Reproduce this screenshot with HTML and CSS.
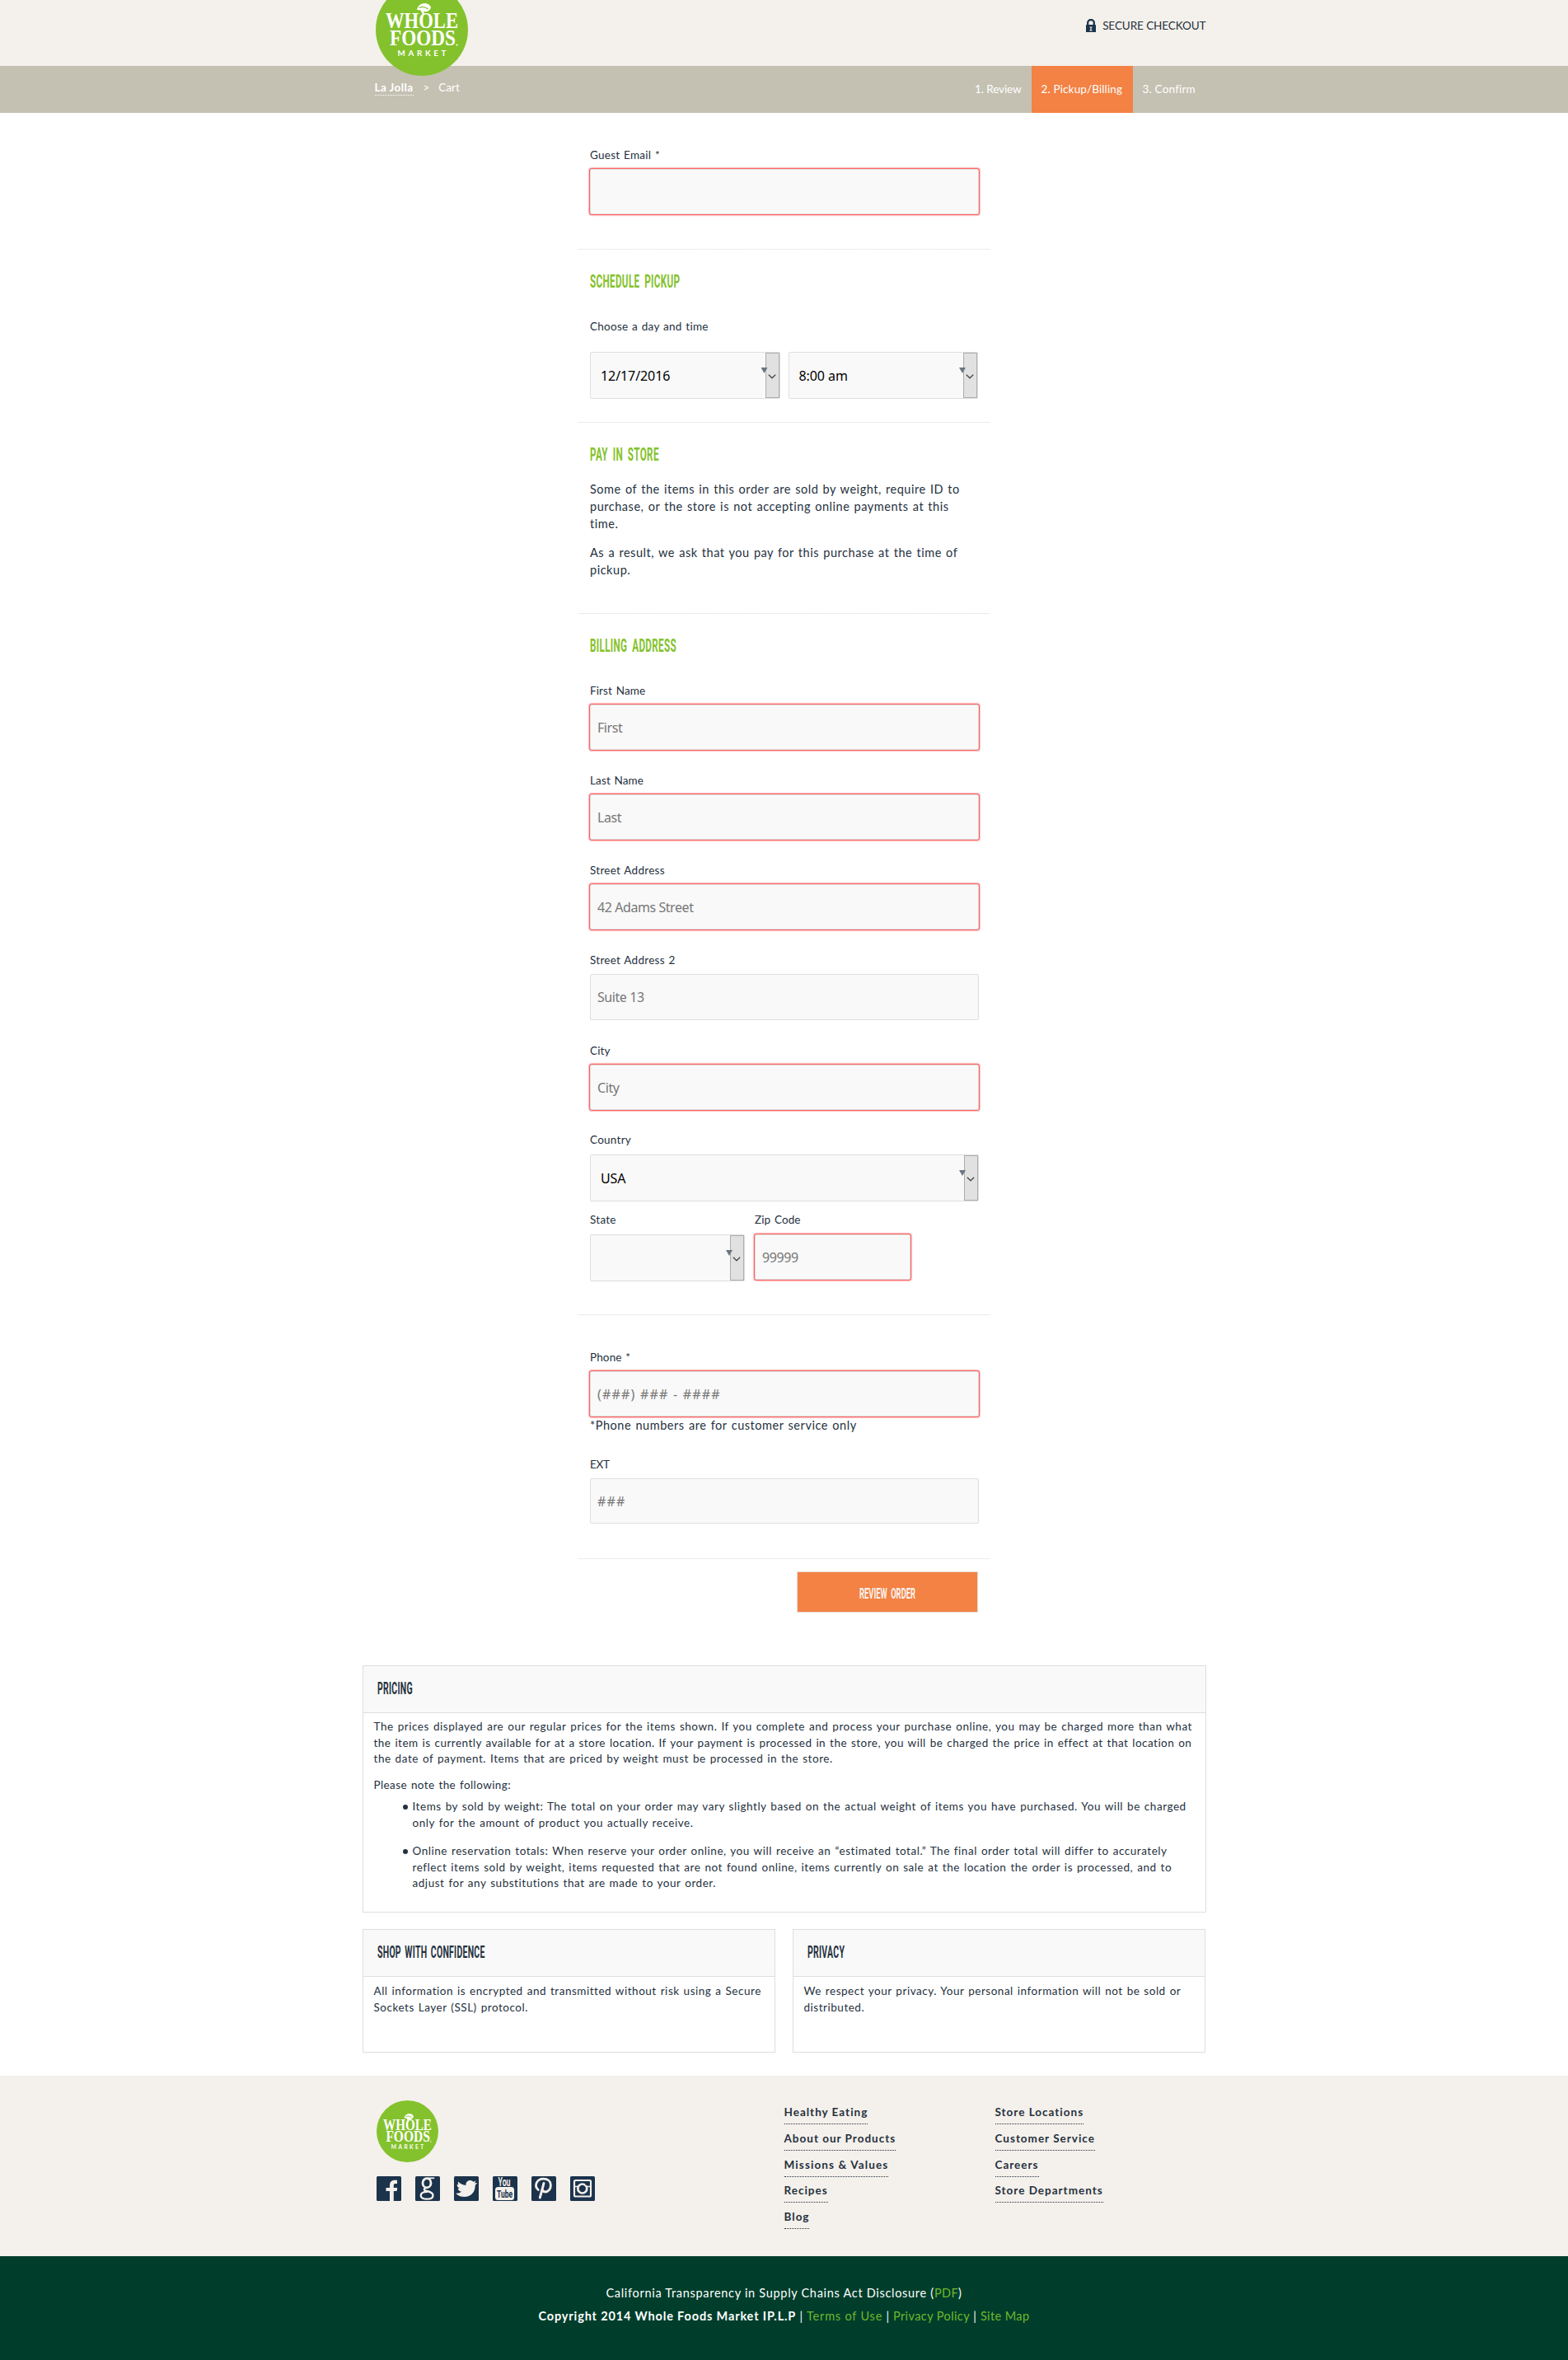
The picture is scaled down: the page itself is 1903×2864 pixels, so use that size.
FILE: index.html
```
<!DOCTYPE html>
<html lang="en">
<head>
<meta charset="utf-8">
<title>Whole Foods Market - Pickup/Billing</title>
<link rel="stylesheet" href="styles.css">
</head>
<body>
<header class="header">
  <div class="container header-row">
    <a class="brand">
      <svg class="brand-logo" viewBox="0 0 112 112">
        <circle cx="56" cy="56" r="56" fill="#84c22d"/>
        <g fill="#fff">
          <text class="logo-serif" x="12" y="53.500" font-size="27" textLength="88" lengthAdjust="spacingAndGlyphs">WHOLE</text>
          <text class="logo-serif" x="17" y="75" font-size="27" textLength="80" lengthAdjust="spacingAndGlyphs">FOODS</text>
          <text class="logo-sans" x="26.500" y="87.500" font-size="9.800" textLength="59">MARKET</text>
          <path d="M50 32c1-5 5-8.500 10-8 4 .400 7 3 7 5.500-1.500 4-5 5.500-9 4.500l1.500 4-3.500-2-1-3c-2-1-3.500-1.300-5-1z"/>
          <circle cx="98.500" cy="74.500" r="1.100"/>
        </g>
        <path d="M52.500 29.500c4-2 7.500-1.500 11 1.500" fill="none" stroke="#84c22d" stroke-width="1.300"/>
      </svg>
    </a>
    <div class="secure">
      <svg class="lock" viewBox="0 0 12 16"><path d="M2.200 7V4.500a3.800 3.500 0 0 1 7.600 0V7" fill="none" stroke="#1c334c" stroke-width="2.300"/><rect y="7" width="12" height="9" rx=".6" fill="#1c334c"/><path d="M4.500 10h3M6 9.500v4M4.500 14h3" stroke="#f4f0eb" stroke-width="1.200"/></svg>
      <span>SECURE CHECKOUT</span>
    </div>
  </div>
</header>

<nav class="subnav">
  <div class="container subnav-row">
    <div class="crumbs"><a class="crumb-link">La Jolla</a><span class="crumb-sep">&gt;</span><span class="crumb-here">Cart</span></div>
    <ol class="steps">
      <li class="step step-review">1. Review</li>
      <li class="step step-billing active">2. Pickup/Billing</li>
      <li class="step step-confirm">3. Confirm</li>
    </ol>
  </div>
</nav>

<main>
<form class="checkout">
  <section class="section guest">
    <label class="label">Guest Email *</label>
    <input class="input required" type="text">
  </section>

  <section class="section schedule">
    <h2 class="title"><span>SCHEDULE PICKUP</span></h2>
    <label class="label">Choose a day and time</label>
    <div class="select-row">
      <div class="select"><span class="select-value">12/17/2016</span><i class="select-arrow"></i><span class="select-button"><svg viewBox="0 0 10 6"><path d="M.8.8 5 4.800 9.200.8"/></svg></span></div>
      <div class="select"><span class="select-value">8:00 am</span><i class="select-arrow"></i><span class="select-button"><svg viewBox="0 0 10 6"><path d="M.8.8 5 4.800 9.200.8"/></svg></span></div>
    </div>
  </section>

  <section class="section pay">
    <h2 class="title title-pay"><span>PAY IN STORE</span></h2>
    <p class="text">Some of the items in this order are sold by weight, require ID to<br>purchase, or the store is not accepting online payments at this<br>time.</p>
    <p class="text">As a result, we ask that you pay for this purchase at the time of<br>pickup.</p>
  </section>

  <section class="section billing">
    <h2 class="title"><span>BILLING ADDRESS</span></h2>
    <div class="field"><label class="label label-tight">First Name</label><input class="input required" type="text" placeholder="First"></div>
    <div class="field"><label class="label label-tight">Last Name</label><input class="input required" type="text" placeholder="Last"></div>
    <div class="field"><label class="label">Street Address</label><input class="input required" type="text" placeholder="42 Adams Street"></div>
    <div class="field field-plain"><label class="label">Street Address 2</label><input class="input" type="text" placeholder="Suite 13"></div>
    <div class="field field-city"><label class="label label-tight">City</label><input class="input required" type="text" placeholder="City"></div>
    <div class="field-select">
      <label class="label">Country</label>
      <div class="select select-country"><span class="select-value">USA</span><i class="select-arrow"></i><span class="select-button"><svg viewBox="0 0 10 6"><path d="M.8.8 5 4.800 9.200.8"/></svg></span></div>
    </div>
    <div class="region-row">
      <div class="field-select region-state">
        <label class="label">State</label>
        <div class="select"><span class="select-value"></span><i class="select-arrow"></i><span class="select-button"><svg viewBox="0 0 10 6"><path d="M.8.8 5 4.800 9.200.8"/></svg></span></div>
      </div>
      <div class="field-select region-zip">
        <label class="label label-tight">Zip Code</label>
        <input class="input required" type="text" placeholder="99999">
      </div>
    </div>
  </section>

  <section class="section phone">
    <label class="label label-tight">Phone *</label>
    <input class="input required hashes" type="text" placeholder="(###) ### - ####">
    <p class="text phone-note">*Phone numbers are for customer service only</p>
    <label class="label label-ext">EXT</label>
    <input class="input hashes" type="text" placeholder="###">
  </section>

  <div class="actions"><button class="review" type="button"><span>REVIEW ORDER</span></button></div>
</form>

<div class="container panels">
  <section class="panel pricing">
    <h3 class="panel-head"><span>PRICING</span></h3>
    <div class="panel-body">
      <p>The prices displayed are our regular prices for the items shown. If you complete and process your purchase online, you may be charged more than what<br><span class="snug">the item is currently available for at a store location. If your payment is processed in the store, you will be charged the price in effect at that location on</span><br>the date of payment. Items that are priced by weight must be processed in the store.</p>
      <p class="snug">Please note the following:</p>
      <ul>
        <li>Items by sold by weight: The total on your order may vary slightly based on the actual weight of items you have purchased. You will be charged<br>only for the amount of product you actually receive.</li>
        <li>Online reservation totals: When reserve your order online, you will receive an “estimated total.” The final order total will differ to accurately<br>reflect items sold by weight, items requested that are not found online, items currently on sale at the location the order is processed, and to<br>adjust for any substitutions that are made to your order.</li>
      </ul>
    </div>
  </section>
  <div class="panel-pair">
    <section class="panel">
      <h3 class="panel-head"><span>SHOP WITH CONFIDENCE</span></h3>
      <div class="panel-body"><p>All information is encrypted and transmitted without risk using a Secure<br>Sockets Layer (SSL) protocol.</p></div>
    </section>
    <section class="panel">
      <h3 class="panel-head"><span>PRIVACY</span></h3>
      <div class="panel-body"><p>We respect your privacy. Your personal information will not be sold or<br>distributed.</p></div>
    </section>
  </div>
</div>
</main>

<footer>
  <div class="footer-main">
    <div class="container footer-row">
      <div class="footer-brand">
        <svg class="footer-logo" viewBox="0 0 112 112">
          <circle cx="56" cy="56" r="56" fill="#84c22d"/>
          <g fill="#fff">
            <text class="logo-serif" x="12" y="53.500" font-size="27" textLength="88" lengthAdjust="spacingAndGlyphs">WHOLE</text>
            <text class="logo-serif" x="17" y="75" font-size="27" textLength="80" lengthAdjust="spacingAndGlyphs">FOODS</text>
            <text class="logo-sans" x="26.500" y="87.500" font-size="9.800" textLength="59">MARKET</text>
            <path d="M50 32c1-5 5-8.500 10-8 4 .400 7 3 7 5.500-1.500 4-5 5.500-9 4.500l1.500 4-3.500-2-1-3c-2-1-3.500-1.300-5-1z"/>
            <circle cx="98.500" cy="74.500" r="1.100"/>
          </g>
          <path d="M52.500 29.500c4-2 7.500-1.500 11 1.500" fill="none" stroke="#84c22d" stroke-width="1.300"/>
        </svg>
        <div class="social">
          <svg viewBox="0 0 30 30"><rect width="30" height="30" rx="1.500" fill="#1c334c"/><path d="M16 30V18h-4.500v-4H16v-2.500C16 7 18 4.800 22 4.800h3V9h-2.200c-1.500 0-2 .700-2 2v3h4.400l-.6 4h-3.800v12z" fill="#f4f0eb"/></svg>
          <svg viewBox="0 0 30 30"><rect width="30" height="30" rx="1.500" fill="#1c334c"/><g fill="none" stroke="#f4f0eb"><ellipse cx="14" cy="8.200" rx="5" ry="5.600" stroke-width="2.800"/><path d="M15 2.300h8.200" stroke-width="1.700"/><path d="M13 14c-3.500 1.500-2.500 3.300 1 4 4 .8 7.500 2.200 7.500 5.200 0 3-3 4.500-7.200 4.500s-7.600-1.300-7.600-4.200c0-3 3.300-4.600 8-4.600" stroke-width="2.300"/></g></svg>
          <svg viewBox="0 0 30 30"><rect width="30" height="30" rx="1.500" fill="#1c334c"/><path d="M5 6.500c2.500 2.500 5.500 4 9.500 4.500C14 7.500 16.500 5 19.500 5c1.700 0 3 .6 4 1.800l3-1.200-1.500 2.700 3.200-.4-2.500 3.100C26 19 20.500 25 12.500 25c-4 0-8-1.500-10.500-4.500 3 .6 5-.2 7-1.700-2.500-.5-3.700-1.800-4.500-3.800h2.200C4.800 13.800 3.600 12 3.700 9.700l2 .6C4.700 9 4.600 7.700 5 6.500z" fill="#f4f0eb"/></svg>
          <svg viewBox="0 0 30 30"><rect width="30" height="30" rx="1.500" fill="#1c334c"/><rect x="3" y="13" width="23" height="16" rx="3.500" fill="#f4f0eb"/><text class="tube" x="6.500" y="11.500" font-size="14" textLength="15" lengthAdjust="spacingAndGlyphs" fill="#f4f0eb">You</text><text class="tube" x="5" y="26" font-size="13.500" textLength="19" lengthAdjust="spacingAndGlyphs" fill="#1c334c">Tube</text></svg>
          <svg viewBox="0 0 30 30"><rect width="30" height="30" rx="1.500" fill="#1c334c"/><g fill="none" stroke="#f4f0eb" stroke-linecap="round"><path d="M8.300 16.500C2.500 11.500 6.500 3.200 14.500 3.200c5.500 0 8.900 3 8.900 7.500 0 5-3 8.300-6.400 8.300-2 0-3-1-3.300-2" stroke-width="2.800"/><path d="M15 8.500 10.300 26" stroke-width="2.900"/></g></svg>
          <svg viewBox="0 0 30 30"><rect width="30" height="30" rx="1.500" fill="#1c334c"/><g fill="none" stroke="#f4f0eb"><rect x="5" y="5" width="20" height="19.500" rx="1.500" stroke-width="2.200"/><circle cx="14.800" cy="15" r="5.500" stroke-width="2.700"/><path d="M4.500 12.500h5M20 12.500h5" stroke-width="1.500"/></g><rect x="18.300" y="6" width="5.200" height="4.800" rx="1" fill="#1c334c"/></svg>
        </div>
      </div>
      <ul class="links links-first">
        <li><a>Healthy Eating</a></li>
        <li><a>About our Products</a></li>
        <li><a class="loose">Missions &amp; Values</a></li>
        <li><a>Recipes</a></li>
        <li><a>Blog</a></li>
      </ul>
      <ul class="links">
        <li><a>Store Locations</a></li>
        <li><a>Customer Service</a></li>
        <li><a>Careers</a></li>
        <li><a>Store Departments</a></li>
      </ul>
    </div>
  </div>
  <div class="legal">
    <p>California Transparency in Supply Chains Act Disclosure (<a>PDF</a>)</p>
    <p class="legal-links"><b>Copyright 2014 Whole Foods Market IP.L.P</b> | <a class="terms">Terms of Use</a> | <a>Privacy Policy</a> | <a>Site Map</a></p>
  </div>
</footer>
</body>
</html>
```
FILE: styles.css
```
* { box-sizing: border-box; }
body { margin: 0; background: #fff; color: #25313e; font: 13.5px/20px Lato, "Liberation Sans", sans-serif; white-space: nowrap; }
h2, h3, p, ul, ol { margin: 0; padding: 0; font-weight: normal; }
ol, .links { list-style: none; }
.container { width: 1024px; margin: 0 auto; }

/* header */
.header { height: 80px; background: #f4f0eb; }
.header-row { display: flex; justify-content: space-between; align-items: flex-start; padding: 0 0 0 16px; }
.brand { position: relative; z-index: 1; margin-top: -20px; height: 112px; margin-bottom: -32px; }
.brand-logo { display: block; width: 112px; height: 112px; }
.logo-serif { font-family: "Liberation Serif", serif; font-weight: 700; }
.logo-sans { font-family: Lato, sans-serif; font-weight: 700; }
.secure { display: flex; align-items: center; gap: 8px; padding-top: 21px; letter-spacing: -.08px; }
.lock { width: 12px; height: 16px; }

.subnav { height: 57px; background: #c4c1b2; color: #fff; }
.subnav-row { display: flex; justify-content: space-between; padding-left: 15px; }
.crumbs { display: flex; align-items: flex-start; padding-top: 17px; }
.crumb-link { font-weight: 700; letter-spacing: .42px; line-height: 18px; border-bottom: 1px dotted #fff; }
.crumb-sep { margin: 0 11px 0 12px; line-height: 19px; }
.crumb-here { line-height: 19px; }
.steps { display: flex; }
.step { height: 57px; padding: 0 12px; line-height: 57px; }
.step-review { letter-spacing: -.1px; }
.step-billing { width: 123px; letter-spacing: .15px; }
.step-confirm { width: 89px; letter-spacing: .2px; }
.step.active { background: #f38244; }

/* checkout form */
.checkout { width: 499px; margin: 0 auto; }
.section { padding: 26px 13px 0 14px; border-bottom: 1px dotted #d9d9d9; }
.label { display: block; height: 20px; margin-bottom: 7px; letter-spacing: .26px; word-spacing: 1px; }
.label-tight { letter-spacing: .13px; }
.label-ext { letter-spacing: -.3px; }
.input { display: block; width: 100%; height: 55px; padding: 0 8px; border: 1px solid #dedede; border-radius: 2px; background: #f9f9f9; font: 16px "Noto Sans", sans-serif; letter-spacing: -.43px; color: #000; outline: 0; }
.input::placeholder { color: #777; opacity: 1; }
.input.required { box-shadow: 0 0 2px 1px #ff2a2a; }
.hashes { letter-spacing: 1.200px; }
.title { height: 24px; font: 700 22.5px/24px Roboto, sans-serif; color: #84c22d; letter-spacing: .6px; word-spacing: 5px; }
.title span, .panel-head span { display: inline-block; transform: scaleX(.52); transform-origin: 0 50%; }
.text { font-size: 14.5px; line-height: 21px; letter-spacing: .53px; word-spacing: 1px; }

.guest { padding-top: 41px; padding-bottom: 42px; }
.schedule { padding-bottom: 28px; }
.schedule .title, .billing .title { margin-bottom: 33px; }
.schedule .label { margin-bottom: 21px; }
.select-row { display: flex; gap: 10px; padding-right: 1px; }
.select-row .select { flex: 1; }
.select { position: relative; display: flex; justify-content: space-between; height: 57px; border: 1px solid #dedede; border-radius: 2px; background: #f9f9f9; }
.select-value { padding-left: 12px; font: 16px/56px "Noto Sans", sans-serif; color: #000; letter-spacing: -.08px; }
.select-button { display: flex; align-items: center; justify-content: center; width: 17px; border: 1px solid #adadad; background: #e1e1e1; }
.select-button svg { width: 10px; height: 6px; margin: 2px 1px 0 0; }
.select-button path { fill: none; stroke: #444; stroke-width: 1.200; }
/* the themed caret overlaps the native drop-down button */
.select-arrow { position: absolute; top: 18px; right: 14px; width: 8px; height: 7px; background: #6c7681; clip-path: polygon(0 0, 100% 0, 50% 100%); }
.select-country .select-arrow { right: 15px; }

.title-pay { margin-bottom: 20px; }
.pay { padding-bottom: 42px; }
.pay .text + .text { margin-top: 14px; }

.billing { padding-bottom: 40px; }
.field { margin-bottom: 27px; }
.field-plain .input { height: 56px; }
.field-city { margin-bottom: 26px; }
.field-select .label { margin-bottom: 8px; }
.region-row { display: flex; gap: 12px; margin-top: 12px; }
.region-state { width: 188px; }
.region-zip { width: 189px; }

.phone { padding-top: 41px; padding-bottom: 42px; }
.phone-note { letter-spacing: .55px; margin-bottom: 27px; }

.actions { display: flex; justify-content: flex-end; padding: 15px 14px 64px; }
.review { width: 220px; height: 50px; padding: 4px 0 0; border: 1px solid #e4dcd4; background: #f38244; color: #f9f3ee; font: 700 17.5px/45px Roboto, sans-serif; word-spacing: 4px; }
.review span { display: block; transform: scaleX(.537); }

/* information panels */
.panel { border: 1px solid #dedede; }
.pricing { height: 300px; margin-bottom: 20px; }
.panel-head { height: 57px; padding-left: 17px; border-bottom: 1px solid #dedede; background: #f9f9f9; font: 700 19.7px/56px Roboto, sans-serif; letter-spacing: .5px; word-spacing: 3px; }
.panel-head span { transform: scaleX(.532); }
.panel-body { padding: 7px 13px; line-height: 19.500px; letter-spacing: .54px; word-spacing: 1px; }
.panel-body .snug { letter-spacing: .48px; }
.panel-body p + p { margin-top: 12px; }
.panel-body p.snug { letter-spacing: .41px; }
.panel-body ul { margin-top: 7px; padding-left: 47px; }
.panel-body li { list-style: none; }
.panel-body li::before { content: ""; float: left; width: 6px; height: 6px; margin: 7px 0 0 -12px; border-radius: 50%; background: #25313e; }
.panel-body li + li { margin-top: 15px; }
.panel-pair { display: grid; grid-template-columns: 501px 501px; gap: 21px; margin-bottom: 28px; }
.panel-pair .panel { height: 150px; }
.panel-pair .panel-body { letter-spacing: .52px; line-height: 20px; }

/* footer */
.footer-main { height: 219px; background: #f4f0eb; }
.footer-row { display: flex; padding: 30px 0 0 17px; }
.footer-brand { width: 495px; }
.footer-logo { display: block; width: 75px; height: 75px; }
.social { display: flex; gap: 17px; margin-top: 17px; }
.social svg { width: 30px; height: 30px; }
.tube { font-family: Roboto, sans-serif; font-weight: 700; }
.links { padding-top: 4px; font-weight: 700; letter-spacing: 1px; }
.links .loose { letter-spacing: 1.120px; }
.links-first { width: 256px; }
.links li { height: 31.750px; }
.links a { display: inline-block; height: 25px; border-bottom: 1px dotted #25313e; }

.legal { height: 126px; padding-top: 31px; background: #003e2b; color: #fff; text-align: center; font-size: 14.500px; line-height: 28px; letter-spacing: .7px; }
.legal a { color: #70b72b; letter-spacing: .4px; }
.legal .terms { letter-spacing: .8px; }
.legal-links { letter-spacing: .6px; }
.legal b { letter-spacing: .85px; }
```
